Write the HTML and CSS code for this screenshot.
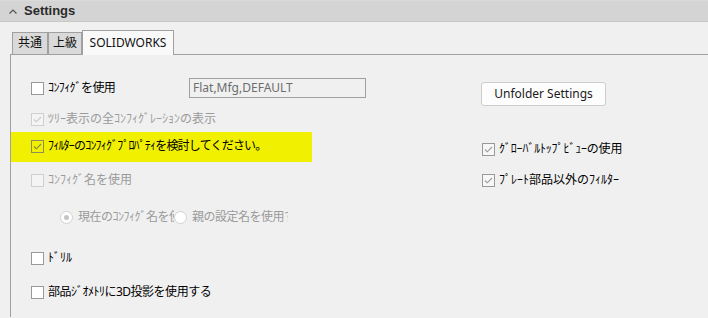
FILE: index.html
```html
<!DOCTYPE html>
<html lang="ja">
<head>
<meta charset="utf-8">
<title>Settings</title>
<link rel="stylesheet" href="styles.css">
</head>
<body>
<div class="header">
  <svg class="chev" width="8" height="5" viewBox="0 0 8 5"><path d="M0.5 4.5 L4 1 L7.5 4.5" fill="none" stroke="#555" stroke-width="1.2"/></svg>
  <span class="title">Settings</span>
</div>
<div class="tabs">
  <div class="tab t1">共通</div>
  <div class="tab t2">上級</div>
  <div class="tab active">SOLIDWORKS</div>
</div>
<div class="panel">
  <div class="col-left">
    <div class="row row1">
      <div class="item w158"><span class="cb"></span><span class="lbl">ｺﾝﾌｨｸﾞを使用</span></div>
      <div class="textbox">Flat,Mfg,DEFAULT</div>
    </div>
    <div class="row row2 disabled">
      <div class="item"><span class="cb checked dis"><svg viewBox="0 0 11 11"><path d="M2 5.5 L4.3 7.8 L9 3" fill="none" stroke="#c9c9c9" stroke-width="1.1"/></svg></span><span class="lbl">ﾂﾘｰ表示の全ｺﾝﾌｨｸﾞﾚｰｼｮﾝの表示</span></div>
    </div>
    <div class="row row3 highlight">
      <div class="item"><span class="cb checked clear"><svg viewBox="0 0 11 11"><path d="M2 5.5 L4.3 7.8 L9 3" fill="none" stroke="#8a8a40" stroke-width="1.1"/></svg></span><span class="lbl">ﾌｨﾙﾀｰのｺﾝﾌｨｸﾞﾌﾟﾛﾊﾟﾃｨを検討してください。</span></div>
    </div>
    <div class="row row4 disabled">
      <div class="item"><span class="cb dis"></span><span class="lbl">ｺﾝﾌｨｸﾞ名を使用</span></div>
    </div>
    <div class="row row5 disabled">
      <div class="radio-item"><span class="rb on"></span><span class="lbl">現在のｺﾝﾌｨｸﾞ名を使用する</span></div>
      <div class="radio-item"><span class="rb"></span><span class="lbl">親の設定名を使用する</span></div>
    </div>
    <div class="row row6">
      <div class="item"><span class="cb"></span><span class="lbl">ﾄﾞﾘﾙ</span></div>
    </div>
    <div class="row row7">
      <div class="item"><span class="cb"></span><span class="lbl">部品ｼﾞｵﾒﾄﾘに3D投影を使用する</span></div>
    </div>
  </div>
  <div class="col-right">
    <div class="button">Unfolder Settings</div>
    <div class="row rrow1">
      <div class="item"><span class="cb checked"><svg viewBox="0 0 11 11"><path d="M2 5.5 L4.3 7.8 L9 3" fill="none" stroke="#9a9a9a" stroke-width="1.1"/></svg></span><span class="lbl">ｸﾞﾛｰﾊﾞﾙﾄｯﾌﾟﾋﾞｭｰの使用</span></div>
    </div>
    <div class="row rrow2">
      <div class="item"><span class="cb checked"><svg viewBox="0 0 11 11"><path d="M2 5.5 L4.3 7.8 L9 3" fill="none" stroke="#9a9a9a" stroke-width="1.1"/></svg></span><span class="lbl">ﾌﾟﾚｰﾄ部品以外のﾌｨﾙﾀｰ</span></div>
    </div>
  </div>
</div>
</body>
</html>
```
FILE: styles.css
```css
* { box-sizing: border-box; }
html, body { margin: 0; padding: 0; }
body {
  width: 708px;
  height: 318px;
  overflow: hidden;
  background: #f0f0f0;
  font-family: "Noto Sans", "Noto Sans CJK JP", sans-serif;
  font-size: 12px;
  line-height: 16px;
  color: #000;
}

.header {
  height: 22px;
  background: #d4d4d4;
  border-top: 1px solid #dadada;
  border-bottom: 1px solid #c8c8c8;
  display: flex;
  align-items: center;
  padding-left: 9px;
}
.chev { display: block; margin-right: 7px; }
.title {
  font-family: "Liberation Sans", "Noto Sans", sans-serif;
  font-weight: 700;
  font-size: 13px;
  color: #2b2b2b;
}

.tabs {
  display: flex;
  align-items: flex-end;
  height: 24px;
  margin: 8px 0 0 12px;
}
.tab {
  height: 22px;
  border: 1px solid #a0a0a0;
  border-bottom: none;
  background: #dadada;
  text-align: center;
  line-height: 20px;
  color: #111;
}
.t1 { width: 36px; }
.t2 { width: 34px; }
.tab.active {
  width: 92px;
  height: 25px;
  margin-bottom: -1px;
  background: #f9f9f9;
  position: relative;
  z-index: 1;
  line-height: 24px;
}

.panel {
  margin-left: 10px;
  height: 263px;
  border-left: 1px solid #a0a0a0;
  border-top: 1px solid #a0a0a0;
  display: grid;
  grid-template-columns: 470px 1fr;
  align-items: start;
}

.col-left, .col-right { display: flex; flex-direction: column; }

.row { display: flex; align-items: center; height: 16px; padding-left: 20px; }
.row1 { height: 20px; margin-top: 23px; }
.row2 { margin-top: 13px; }
.row3 { margin-top: 5px; height: 30px; width: 301px; padding-bottom: 2px; }
.row4 { margin-top: 10px; }
.row5 { margin-top: 21px; padding-left: 49px; }
.row6 { margin-top: 25px; }
.row7 { margin-top: 18px; }

.highlight { background: #f0f000; }
.disabled { color: #9a9a9a; }

.item { display: flex; align-items: center; white-space: nowrap; }
.w158 { width: 158px; }
.lbl { margin-left: 4px; white-space: nowrap; }
.row1 .lbl { letter-spacing: -0.6px; }
.row3 .lbl { letter-spacing: -0.8px; }
.row5 .lbl { letter-spacing: -0.5px; }
.row7 .lbl { letter-spacing: -0.5px; }
.rrow1 .lbl { letter-spacing: -0.2px; }

.cb {
  width: 13px;
  height: 13px;
  border: 1px solid #999;
  background: #fff;
  flex: none;
  display: block;
}
.cb svg { display: block; width: 11px; height: 11px; }
.cb.checked { background: #f7f7f7; }
.cb.clear { background: transparent; border-color: #8e8e5a; }
.cb.dis { border-color: #cfcfcf; background: #f4f4f4; }

.radio-item {
  width: 114px;
  overflow: hidden;
  display: flex;
  align-items: center;
  white-space: nowrap;
}
.rb {
  width: 13px;
  height: 13px;
  border: 1px solid #d2d2d2;
  border-radius: 50%;
  background: #fff;
  flex: none;
  display: flex;
  align-items: center;
  justify-content: center;
}
.rb.on::after {
  content: "";
  width: 5px;
  height: 5px;
  border-radius: 50%;
  background: #c4c4c4;
}
.radio-item .lbl { margin-left: 5px; }

.textbox {
  width: 177px;
  height: 20px;
  border: 1px solid #a0a0a0;
  background: #f0f0f0;
  color: #6d6d6d;
  padding-left: 3px;
  line-height: 18px;
  font-family: "Noto Sans", sans-serif;
}

.button {
  width: 125px;
  height: 24px;
  margin-top: 27px;
  border: 1px solid #cdcdcd;
  border-radius: 3px;
  background: #fdfdfd;
  text-align: center;
  line-height: 22px;
  color: #1a1a1a;
}
.col-right .row { padding-left: 1px; }
.rrow1 { margin-top: 35px; }
.rrow2 { margin-top: 15px; }
```
